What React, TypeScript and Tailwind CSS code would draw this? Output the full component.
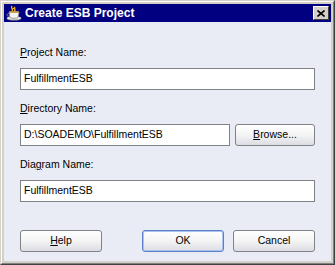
const font = { fontFamily: '"Liberation Sans", Arial, sans-serif' };

function CupIcon() {
  return (
    <svg width="17" height="16" viewBox="0 0 17 16">
      <path d="M7 1 C5 3 9 4 7 6 M10 2 C8.5 3.5 11 4.5 9.5 6.5" stroke="#f0b000" strokeWidth="1.4" fill="none" />
      <path d="M7.5 4 L9 3" stroke="#ffe070" strokeWidth="1" />
      <ellipse cx="9" cy="13.5" rx="7.5" ry="2" fill="#9a9a9a" />
      <ellipse cx="9" cy="13" rx="7" ry="1.6" fill="#e6e6e6" />
      <path d="M4 7 L14 7 L13 12.5 C12 13.5 6 13.5 5 12.5 Z" fill="#f4f4f4" stroke="#8a8a8a" strokeWidth="0.8" />
      <ellipse cx="9" cy="7" rx="5" ry="1" fill="#c9a050" />
      <path d="M4.3 8.5 C1 8.5 1 11.5 4.8 11" stroke="#8a8a8a" strokeWidth="1" fill="none" />
    </svg>
  );
}

function CloseBtn() {
  return (
    <div className="w-[16px] h-[14px] bg-[#d4d0c8] border border-t-white border-l-white border-r-[#404040] border-b-[#404040] flex items-center justify-center">
      <svg width="8" height="7" viewBox="0 0 8 7">
        <path d="M0.5 0.5 L7.5 6.5 M7.5 0.5 L0.5 6.5" stroke="#000" strokeWidth="1.6" />
      </svg>
    </div>
  );
}

function Field({ value, className = "" }: { value: string; className?: string }) {
  return (
    <div className={`h-[22px] bg-white border border-[#7f8287] flex items-center pl-[3px] text-[10.5px] text-black ${className}`}>
      {value}
    </div>
  );
}

function Btn({ children, primary = false }: { children: React.ReactNode; primary?: boolean }) {
  return (
    <div
      className={`w-[82px] h-[22px] rounded-[3px] border flex items-center justify-center text-[10.5px] text-black bg-gradient-to-b from-white via-[#f4f4f4] to-[#dcdde3] ${
        primary ? "border-[#5b80c8] shadow-[inset_0_0_0_1px_#a9c2ee]" : "border-[#808287]"
      }`}
    >
      {children}
    </div>
  );
}

export default function App() {
  return (
    <div className="w-[335px] h-[265px] border border-t-[#d4d0c8] border-l-[#d4d0c8] border-r-[#404040] border-b-[#404040]" style={font}>
      <div className="w-full h-full border border-t-white border-l-white border-r-[#808080] border-b-[#808080] bg-[#d4d0c8] p-[2px] flex flex-col">
        <div className="h-[18px] bg-[#000080] flex items-center pl-[1px] pr-[2px]">
          <CupIcon />
          <span className="ml-[3px] text-white font-bold text-[12px] leading-none">Create ESB Project</span>
          <div className="ml-auto">
            <CloseBtn />
          </div>
        </div>
        <div className="flex-1 bg-[#e9ecf5] px-[16px] pt-[24px] flex flex-col text-[10.5px] text-black">
          <div className="leading-[13px] mb-[9px]">
            <u>P</u>roject Name:
          </div>
          <Field value="FulfillmentESB" />
          <div className="leading-[13px] mt-[12px] mb-[9px]">
            <u>D</u>irectory Name:
          </div>
          <div className="flex gap-[5px]">
            <Field value="D:\SOADEMO\FulfillmentESB" className="flex-1" />
            <div className="[&>div]:w-[80px]">
              <Btn>
                <span>
                  <u>B</u>rowse...
                </span>
              </Btn>
            </div>
          </div>
          <div className="leading-[13px] mt-[12px] mb-[9px]">
            Dia<u>g</u>ram Name:
          </div>
          <Field value="FulfillmentESB" />
          <div className="flex justify-between mt-[28px]">
            <Btn>
              <span>
                <u>H</u>elp
              </span>
            </Btn>
            <div className="flex gap-[9px]">
              <Btn primary>OK</Btn>
              <Btn>Cancel</Btn>
            </div>
          </div>
        </div>
      </div>
    </div>
  );
}
